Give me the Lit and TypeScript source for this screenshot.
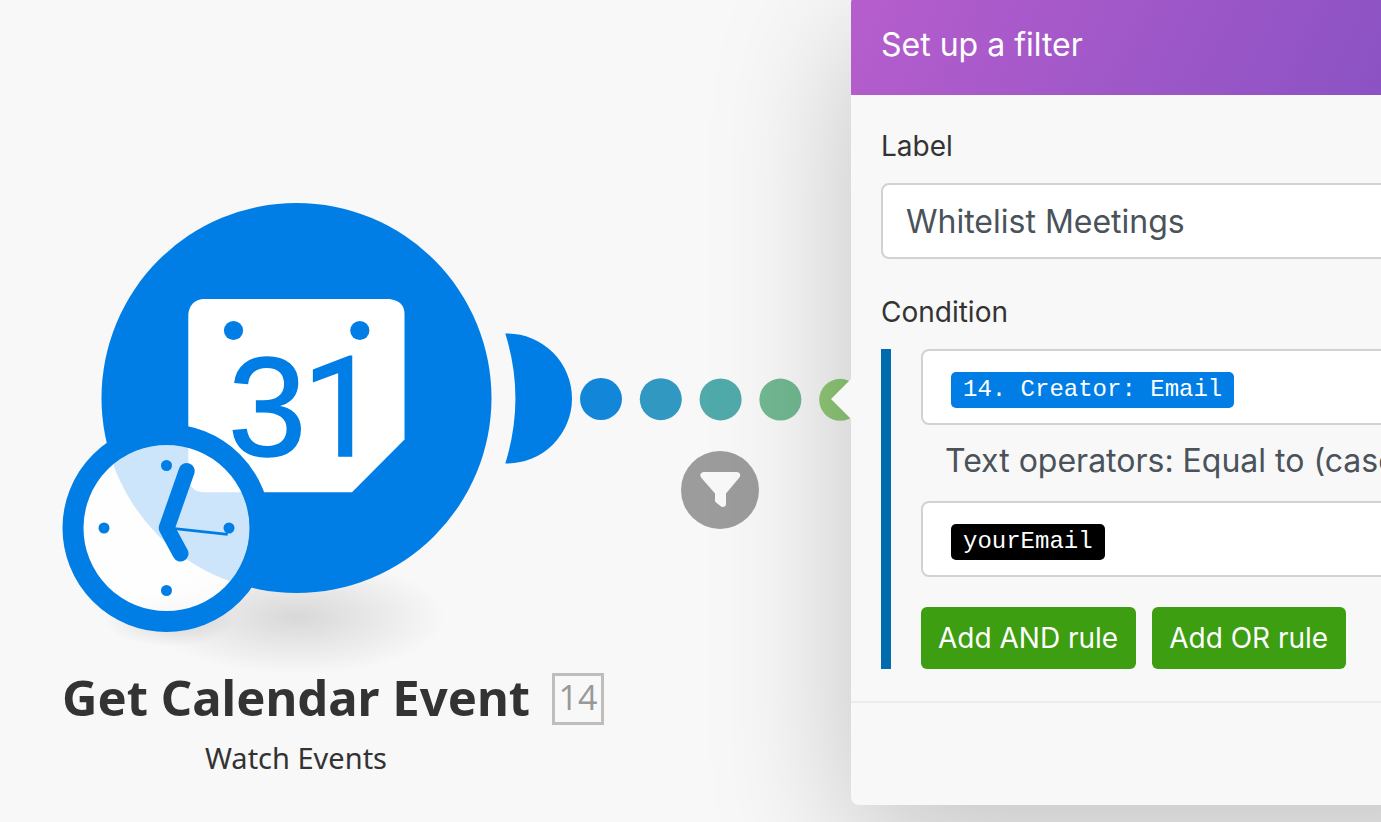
import { LitElement, html, svg, css } from "lit";
import { customElement, property, state } from "lit/decorators.js";

@customElement("calendar-module")
class CalendarModule extends LitElement {
  @property() name = "";
  @property() action = "";
  @property({ type: Number }) number = 0;

  static styles = css`
    :host {
      display: flex;
      flex-direction: column;
      align-items: center;
      color: #333;
      font-family: "Noto Sans", sans-serif;
    }
    .graphic {
      display: block;
      width: 464px;
      height: 468px;
      overflow: visible;
    }
    .heading {
      position: relative;
    }
    .name {
      margin: 0;
      font-size: 49px;
      font-weight: 700;
      line-height: 52px;
      white-space: nowrap;
    }
    .badge {
      position: absolute;
      top: 2px;
      left: calc(100% + 22px);
      box-sizing: border-box;
      width: 52px;
      height: 52px;
      border: 3px solid #bebebe;
      color: #999;
      font-family: "Open Sans", sans-serif;
      font-size: 34px;
      line-height: 42px;
      text-align: center;
    }
    .action {
      margin: 14px 0 0;
      font-size: 29px;
      line-height: 42px;
      white-space: nowrap;
    }
    .three {
      font: 400 141px "Liberation Sans", sans-serif;
    }
    .one {
      font: 400 139px Roboto, sans-serif;
    }
  `;

  render() {
    return html`
      <svg class="graphic" viewBox="64 203 464 468" aria-hidden="true">
        <defs>
          <radialGradient id="shade">
            <stop offset="0" stop-color="#000" stop-opacity=".13" />
            <stop offset=".5" stop-color="#000" stop-opacity=".065" />
            <stop offset="1" stop-color="#000" stop-opacity="0" />
          </radialGradient>
        </defs>
        <ellipse cx="297" cy="617" rx="150" ry="58" fill="url(#shade)" />
        <ellipse cx="170" cy="619" rx="66" ry="28" fill="url(#shade)" />
        <circle cx="296.500" cy="398" r="195" fill="#007ee5" />
        <path
          fill="#fff"
          d="M203 299H389.500Q404.500 301 404.500 314V439.500L352 492.300H203Q189.500 491 188.300 478V314Q190 300.500 203 299Z"
        />
        <g fill="#007ee5">
          <circle cx="233.500" cy="330.500" r="9.600" />
          <circle cx="359.800" cy="330.500" r="9.600" />
          <g stroke="#007ee5" stroke-width="1.500">
            <text class="three" x="228" y="456">3</text>
            <text class="one" x="302" y="456">1</text>
          </g>
        </g>
        <circle cx="166.500" cy="528" r="83.500" fill="#fff" fill-opacity=".8" />
        <circle cx="166.500" cy="528" r="93.500" fill="none" stroke="#007ee5" stroke-width="21" />
        <g fill="#007ee5">
          <circle cx="166.500" cy="465.500" r="5.500" />
          <circle cx="104" cy="528" r="5.500" />
          <circle cx="229" cy="528" r="5.500" />
          <circle cx="166.500" cy="590.500" r="5.500" />
        </g>
        <g fill="none" stroke="#007ee5">
          <path
            d="M186.700 471L166.700 528L180.500 553.500"
            stroke-width="16"
            stroke-linecap="round"
            stroke-linejoin="round"
          />
          <path d="M170 528.100L227.700 534.300" stroke-width="2.800" />
        </g>
      </svg>
      <div class="heading">
        <h2 class="name">${this.name}</h2>
        <span class="badge">${this.number}</span>
      </div>
      <p class="action">${this.action}</p>
    `;
  }
}

@customElement("filter-panel")
class FilterPanel extends LitElement {
  @state() private label = "Whitelist Meetings";

  static styles = css`
    :host {
      display: block;
      position: relative;
      border-radius: 8px;
      background: #f8f8f8;
      box-shadow: 0 40px 140px rgba(0, 0, 0, 0.22);
      color: #333;
      font: 400 28px/36px Inter, sans-serif;
    }
    .arrow {
      position: absolute;
      top: 384px;
      left: -20px;
      width: 20px;
      height: 40px;
      background: #f8f8f8;
      clip-path: polygon(100% 0, 0 50%, 100% 100%);
    }
    .header {
      padding: 30px;
      border-radius: 8px 8px 0 0;
      background: linear-gradient(115deg, #b65dcd 0%, #8a52c3 82%, #804ebf 100%);
      color: #fff;
    }
    .title {
      margin: 0;
      font-size: 32px;
      font-weight: 400;
      line-height: 40px;
    }
    .body {
      display: flex;
      flex-direction: column;
      gap: 35px;
      padding: 33px 30px 32px;
    }
    .group {
      display: flex;
      flex-direction: column;
      align-items: stretch;
      gap: 19px;
    }
    .field {
      box-sizing: border-box;
      width: 100%;
      height: 76px;
      border: 2px solid #d2d2d2;
      border-radius: 8px;
      padding: 0 23px;
      background: #fff;
      color: #4a525a;
      font: 400 32px/40px Inter, sans-serif;
    }
    .expression {
      display: flex;
      align-items: center;
      padding: 6px 28px 0;
    }
    .pill {
      border-radius: 5px;
      padding: 0 12px;
      background: #007ee5;
      color: #fff;
      font: 400 24px/36px "Liberation Mono", monospace;
    }
    .variable {
      background: #000;
    }
    .operator {
      appearance: none;
      border-color: transparent;
      padding: 0 22px 4px;
      background: transparent;
    }
    .rule {
      border-left: 10px solid #006cae;
      padding-left: 30px;
    }
    .buttons {
      display: flex;
      gap: 16px;
      padding-top: 30px;
    }
    .button {
      border: 0;
      border-radius: 6px;
      padding: 13px 18px 13px 17px;
      background: #3c9e10;
      color: #fff;
      font: 400 28px/36px Inter, sans-serif;
      white-space: nowrap;
    }
    .footer {
      height: 102px;
      border-top: 2px solid #ececec;
    }
  `;

  render() {
    return html`
      <span class="arrow"></span>
      <header class="header"><h1 class="title">Set up a filter</h1></header>
      <div class="body">
        <div class="group">
          <label for="label">Label</label>
          <input
            id="label"
            class="field"
            type="text"
            .value=${this.label}
            @input=${(e: Event) => (this.label = (e.target as HTMLInputElement).value)}
          />
        </div>
        <div class="group" role="group" aria-labelledby="condition">
          <span id="condition">Condition</span>
          <div class="rule">
            <div class="field expression" role="textbox" tabindex="0" aria-label="Left operand">
              <span class="pill">14. Creator: Email</span>
            </div>
            <select class="field operator" aria-label="Operator">
              <option>Text operators: Equal to (case insensitive)</option>
            </select>
            <div class="field expression" role="textbox" tabindex="0" aria-label="Right operand">
              <span class="pill variable">yourEmail</span>
            </div>
            <div class="buttons">
              <button class="button" type="button">Add AND rule</button>
              <button class="button" type="button">Add OR rule</button>
            </div>
          </div>
        </div>
      </div>
      <footer class="footer"></footer>
    `;
  }
}

const links = ["#1287da", "#3198c2", "#51aaaa", "#72b992", "#90c978"];

@customElement("app-root")
class AppRoot extends LitElement {
  static styles = css`
    :host {
      display: block;
      background: #f8f8f8;
    }
    .page {
      display: flex;
      align-items: flex-start;
      min-height: 100vh;
      overflow: hidden;
    }
    .canvas {
      position: relative;
      flex: 1 1 0;
      align-self: stretch;
      min-width: 0;
    }
    .module {
      position: absolute;
      top: 203px;
      left: 64px;
      width: 464px;
    }
    .route {
      position: absolute;
      top: 333px;
      left: 505px;
    }
    .filter {
      position: absolute;
      top: 451px;
      left: 681px;
      width: 78px;
      height: 78px;
      border: 0;
      border-radius: 50%;
      padding: 0;
      background: #9c9c9c;
    }
    .funnel {
      display: block;
    }
    .panel {
      flex: 0 0 680px;
      margin: -5px -150px 0 0;
    }
  `;

  render() {
    return html`
      <div class="page">
        <main class="canvas">
          <calendar-module
            class="module"
            name="Get Calendar Event"
            action="Watch Events"
            number="14"
          ></calendar-module>
          <svg class="route" width="357" height="131" viewBox="505 333 357 131" aria-hidden="true">
            <path
              fill="#007ee5"
              d="M505.300 333.500H507A65 65 0 0 1 507 463.500H505.300A218.500 218.500 0 0 0 505.300 333.500Z"
            />
            ${links.map(
              (color, i) => svg`<circle cx=${601 + i * 59.8} cy=${399 + i * 0.2} r="21" fill=${color} />`
            )}
          </svg>
          <button class="filter" type="button" aria-label="Filter">
            <svg class="funnel" width="78" height="78" viewBox="681 451 78 78">
              <path
                fill="#f8f8f8"
                d="M703.500 472H737Q740.500 472.500 740.200 475.500Q740 477 739 478L726 493.500V504.500Q725.500 507 722.500 507Q721.500 507 720.500 506L716 502.500Q715 501.500 715 500.500V493.500L701.500 478Q700.300 476.500 700.300 475.200Q700.500 472.500 703.500 472Z"
              />
            </svg>
          </button>
        </main>
        <filter-panel class="panel"></filter-panel>
      </div>
    `;
  }
}
